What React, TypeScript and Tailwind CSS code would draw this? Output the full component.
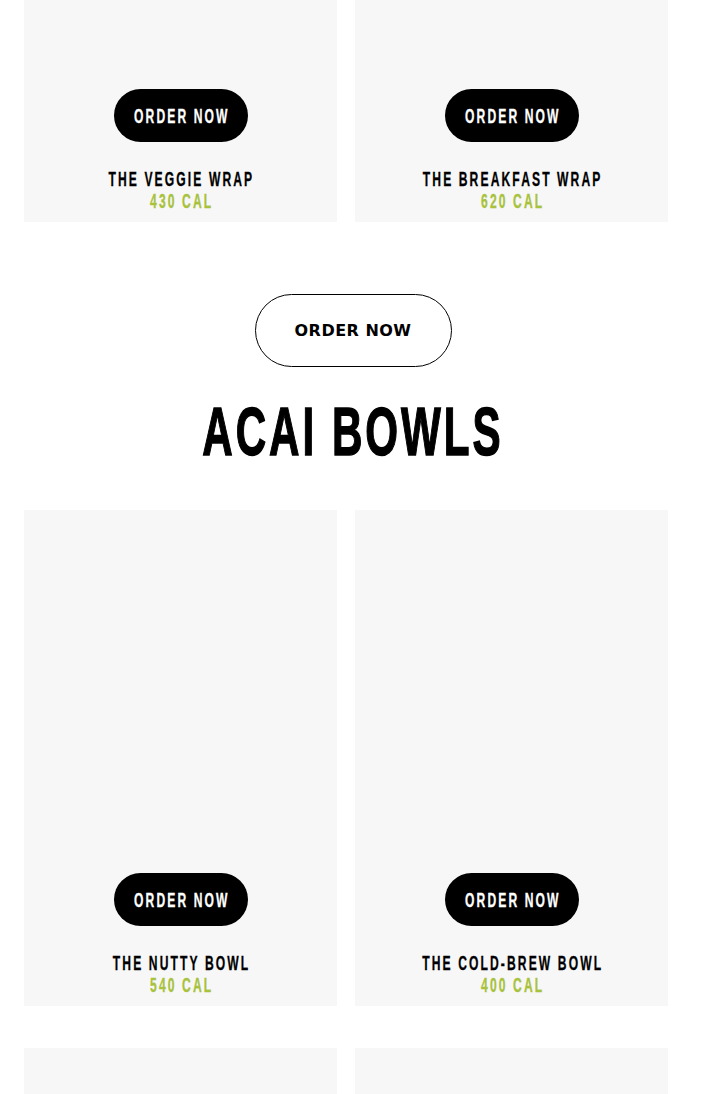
import React from "react";

const cond = { fontFamily: '"Liberation Sans", Arial, sans-serif' };

function Cond({ children, className = "" }: { children: React.ReactNode; className?: string }) {
  return (
    <span
      className={"inline-block whitespace-nowrap scale-x-[0.62] origin-center " + className}
      style={cond}
    >
      {children}
    </span>
  );
}

const small =
  "text-[19.5px] leading-[22px] font-bold tracking-[3.4px] pl-[3.4px] [-webkit-text-stroke:0.3px_currentColor]";

function Card({ name, cal }: { name: string; cal: string }) {
  return (
    <div className="w-[313px] h-[496px] bg-[#f7f7f7] flex flex-col items-center justify-end pb-[10px]">
      <button className="w-[134px] h-[53px] rounded-full bg-black text-white flex items-center justify-center">
        <Cond className={small}>ORDER NOW</Cond>
      </button>
      <div className="mt-[26px] w-full flex justify-center text-black">
        <Cond className={small}>{name}</Cond>
      </div>
      <div className="w-full flex justify-center text-[#a8c23c]">
        <Cond className={small}>{cal}</Cond>
      </div>
    </div>
  );
}

export default function App() {
  return (
    <div className="w-[705px] h-[1094px] overflow-hidden bg-white">
      <div className="-mt-[274px]">
        <div className="flex gap-[18px] pl-[24px]">
          <Card name="THE VEGGIE WRAP" cal="430 CAL" />
          <Card name="THE BREAKFAST WRAP" cal="620 CAL" />
        </div>
        <div className="flex justify-center mt-[72px] pl-[1px]">
          <button
            className="w-[197px] h-[73px] rounded-full border border-black bg-white text-[16px] leading-[20px] font-bold tracking-[0.03em] text-black"
            style={{ fontFamily: '"DejaVu Sans", sans-serif' }}
          >
            ORDER NOW
          </button>
        </div>
        <div className="mt-[28px] flex justify-center text-black pr-[3px]">
          <Cond className="text-[68px] leading-[72px] font-bold tracking-[4.8px] pl-[4.8px] [-webkit-text-stroke:1.4px_currentColor]">
            ACAI BOWLS
          </Cond>
        </div>
        <div className="flex gap-[18px] mt-[43px] pl-[24px]">
          <Card name="THE NUTTY BOWL" cal="540 CAL" />
          <Card name="THE COLD-BREW BOWL" cal="400 CAL" />
        </div>
        <div className="flex gap-[18px] mt-[42px] pl-[24px]">
          <div className="w-[313px] h-[496px] bg-[#f7f7f7]" />
          <div className="w-[313px] h-[496px] bg-[#f7f7f7]" />
        </div>
      </div>
    </div>
  );
}
